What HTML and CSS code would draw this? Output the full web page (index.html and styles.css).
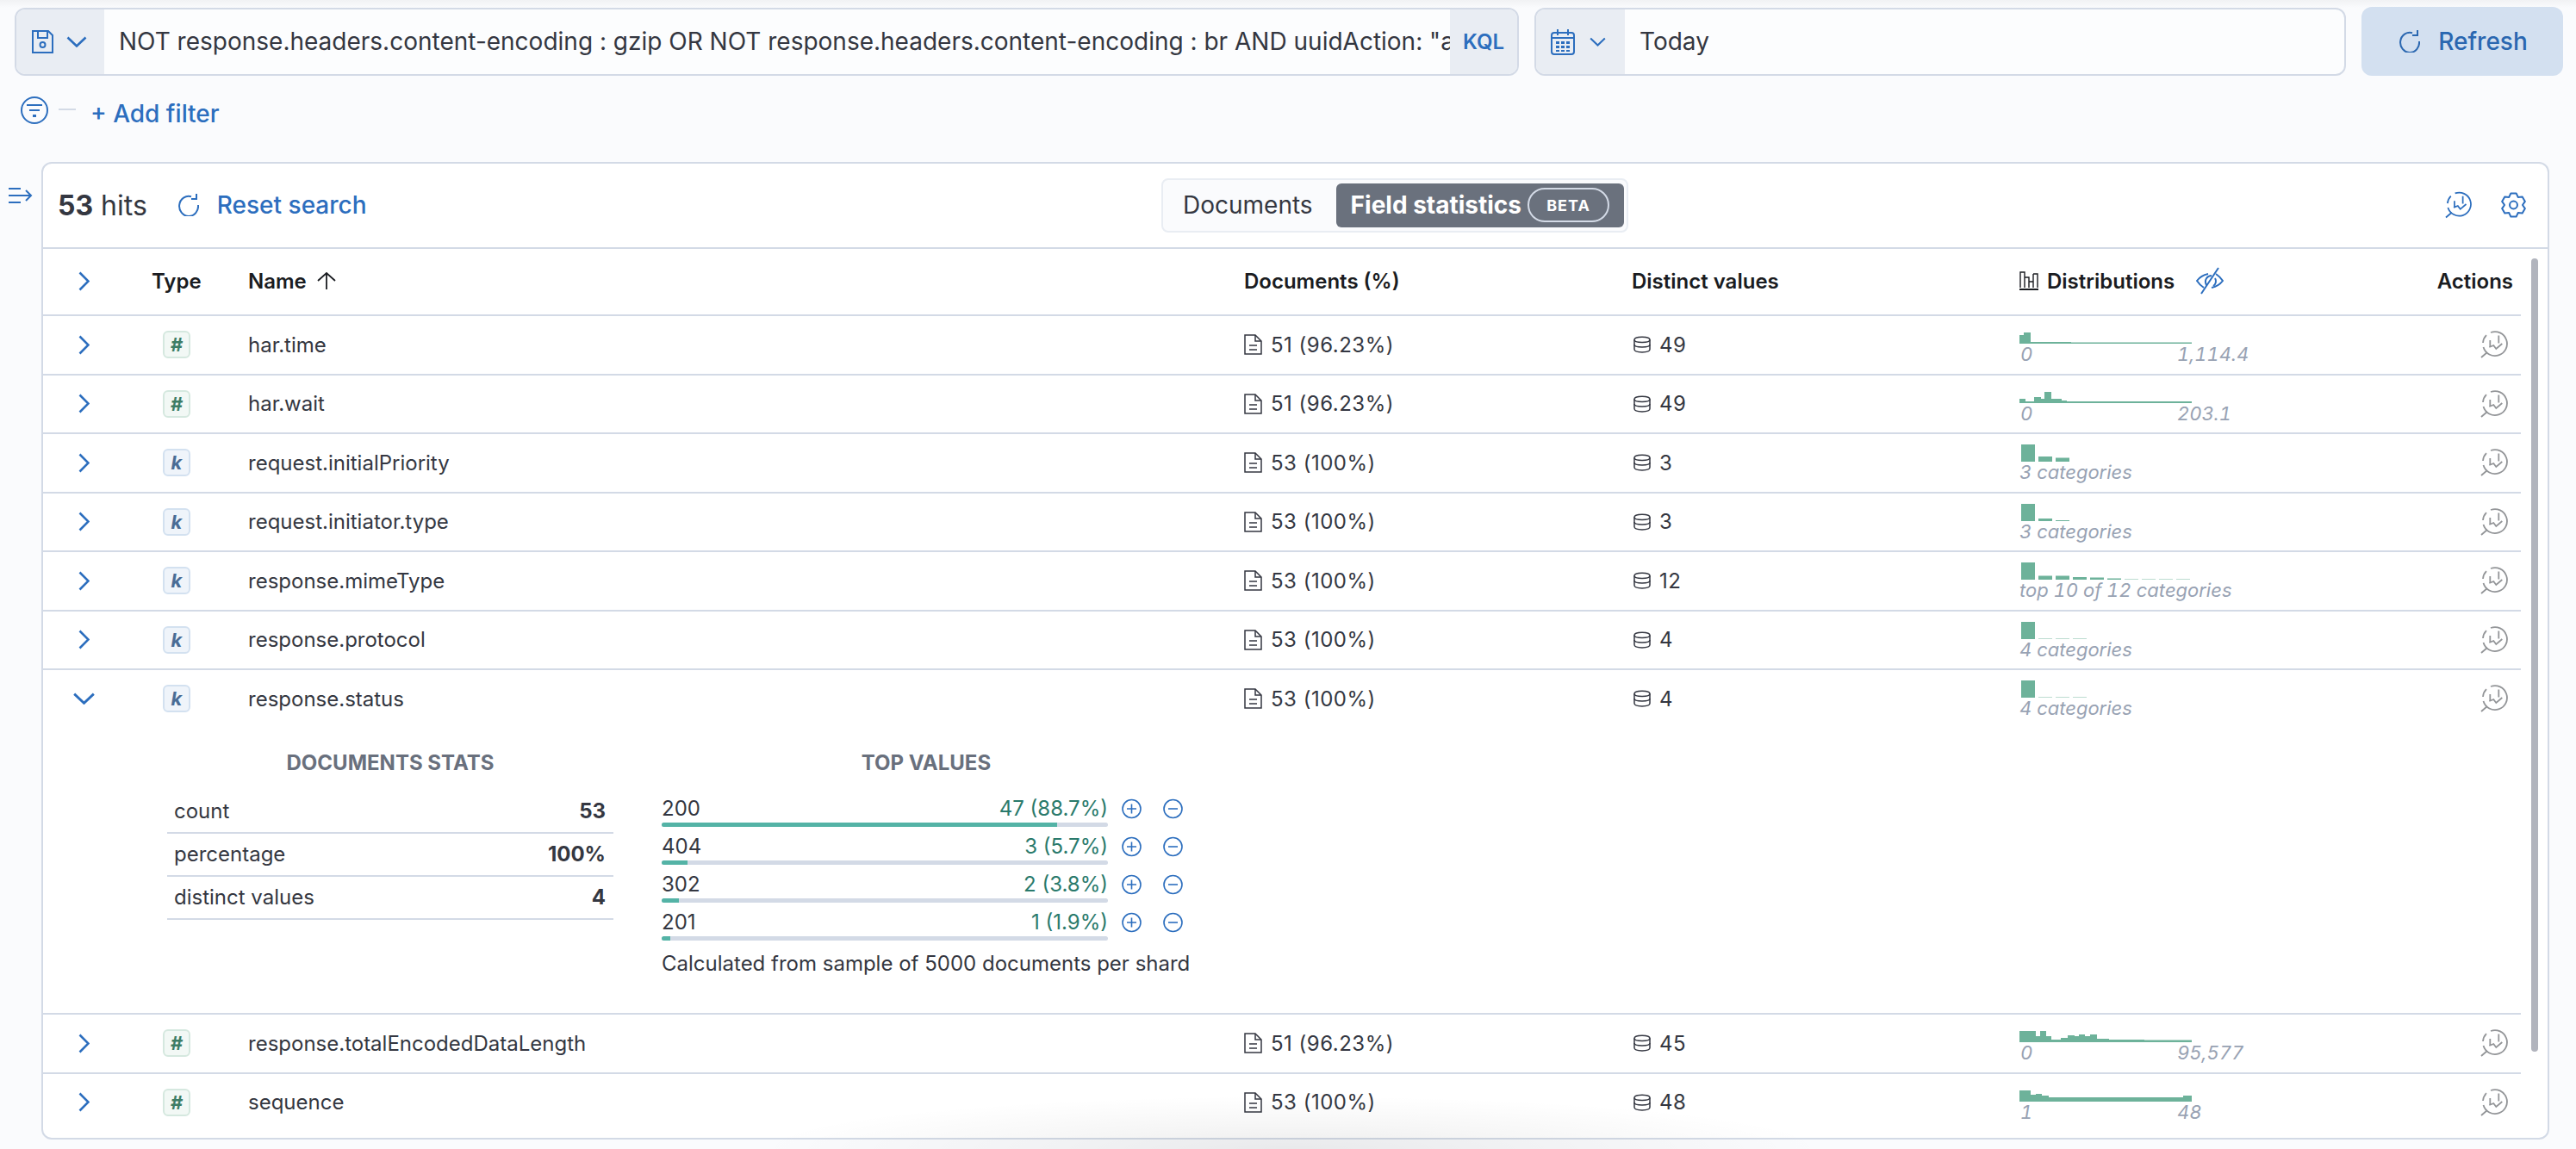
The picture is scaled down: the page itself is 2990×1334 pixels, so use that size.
FILE: index.html
```html
<!DOCTYPE html>
<html>
<head>
    <title>Discover - Field statistics</title>
    <meta charset="UTF-8">
    <link rel="stylesheet" href="styles.css">
</head>
<body>
    <svg class="defs" width="0" height="0">
        <symbol id="i-right" viewBox="0 0 13 23"><path d="M1.500 1.500 11.500 11.500 1.500 21.500" fill="none" stroke="currentColor" stroke-width="2.600"/></symbol>
        <symbol id="i-down" viewBox="0 0 24 13"><path d="M1.500 1.500 12 11.500 22.500 1.500" fill="none" stroke="currentColor" stroke-width="2.600"/></symbol>
        <symbol id="i-save" viewBox="0 0 27 27"><g fill="none" stroke="currentColor" stroke-width="2"><path d="M2 1h18l5 5v20H2z"/><path d="M8 1v8h11V1"/><circle cx="13.500" cy="17" r="3"/></g></symbol>
        <symbol id="i-calendar" viewBox="0 0 28 30"><g fill="none" stroke="currentColor" stroke-width="2"><rect x="1" y="4" width="26" height="25" rx="3"/><path d="M1 10h26M8 0v7M20 0v7"/></g><g fill="currentColor"><rect x="6" y="14" width="4" height="3"/><rect x="12" y="14" width="4" height="3"/><rect x="18" y="14" width="4" height="3"/><rect x="6" y="19" width="4" height="3"/><rect x="12" y="19" width="4" height="3"/><rect x="18" y="19" width="4" height="3"/><rect x="6" y="24" width="4" height="2"/><rect x="12" y="24" width="4" height="2"/><rect x="18" y="24" width="4" height="2"/></g></symbol>
        <symbol id="i-refresh" viewBox="0 0 24 26"><g fill="none" stroke="currentColor" stroke-width="2"><path d="M15 3.200A11 11.600 0 1 0 23 13"/><path d="M21 0v6h-6"/></g></symbol>
        <symbol id="i-filter" viewBox="0 0 32 32"><g fill="none" stroke="currentColor" stroke-width="2"><circle cx="16" cy="16" r="15"/><path d="M7 10h18M10 16h12"/><path d="M14 22.500h4" stroke-width="3"/></g></symbol>
        <symbol id="i-collapse" viewBox="0 0 28 18"><g fill="none" stroke="currentColor" stroke-width="2"><path d="M0 1h14M0 9h26M0 17h14M20 3l6 6-6 6"/></g></symbol>
        <symbol id="i-lens" viewBox="0 0 32 32"><g fill="none" stroke="currentColor" stroke-width="1.800"><path d="M12 2A14 14 0 1 1 3.500 19"/><path d="M3 14A14 14 0 0 1 7 5.200M8 25 1 31"/><path d="M11.300 18v-7M21.300 14.500V5.500M10.300 19l5-2 3 4 7-6"/></g></symbol>
        <symbol id="i-gear" viewBox="0 0 16 16"><g fill="none" stroke="currentColor" stroke-width="1.050" stroke-linejoin="round"><path d="M6.380.99H9.620L10.700 3.320 13.270 3.090 14.890 5.900 13.400 8 14.890 10.100 13.270 12.910 10.700 12.680 9.620 15.010H6.380L5.300 12.680 2.730 12.910 1.110 10.100 2.600 8 1.110 5.900 2.730 3.090 5.300 3.320Z"/><circle cx="8" cy="8" r="2.300"/></g></symbol>
        <symbol id="i-eye-off" viewBox="0 0 32 32"><g fill="none" stroke="currentColor" stroke-width="2"><path d="M14 8C9 9 4 12 1 16 3 19 6 22 9 24M18 24C23 23 28 20 31 16 29 13 26 10 23 8"/><path d="M26 1 6 31M12 21C9 15 13 10 18 10M20 22C23 20 24 16 22 13"/></g></symbol>
        <symbol id="i-doc" viewBox="0 0 21 24"><g fill="none" stroke="currentColor" stroke-width="1.500"><path d="M1 1h12l7 7v15H1z"/><path d="M13 1v7h7M6 13h9M6 18h9"/></g></symbol>
        <symbol id="i-db" viewBox="0 0 20 20"><g fill="none" stroke="currentColor" stroke-width="1.500"><path d="M1 4.500c0-4.500 18-4.500 18 0v11c0 4.500-18 4.500-18 0z"/><path d="M1 4.500c0 4 18 4 18 0M1 10c0 4 18 4 18 0"/></g></symbol>
        <symbol id="i-bars" viewBox="0 0 22 22"><g fill="none" stroke="currentColor" stroke-width="1.400"><path d="M1 19V1h5v18M6 7h5v12M11 12h5M16 3h5v16M16 3v16"/></g><rect y="20" width="22" height="2" fill="currentColor"/></symbol>
        <symbol id="i-up" viewBox="0 0 22 20"><path d="M1 10 11 1l10 9M11 1v19" fill="none" stroke="currentColor" stroke-width="1.800"/></symbol>
        <symbol id="i-plus" viewBox="0 0 25 24"><g fill="none" stroke="currentColor" stroke-width="1.600"><circle cx="12.500" cy="12" r="10.500"/><path d="M7 12h11M12.500 6.500v11"/></g></symbol>
        <symbol id="i-minus" viewBox="0 0 25 24"><g fill="none" stroke="currentColor" stroke-width="1.600"><circle cx="12.500" cy="12" r="10.500"/><path d="M7 12h11"/></g></symbol>
    </svg>

    <div class="top-shadow"></div>

    <div class="search-bar">
        <div class="field query-field">
            <div class="prepend save-prepend">
                <svg class="icon-save"><use href="#i-save"/></svg>
                <svg class="icon-down"><use href="#i-down"/></svg>
            </div>
            <div class="field-text">NOT response.headers.content-encoding : gzip OR NOT response.headers.content-encoding : br AND uuidAction: "ac</div>
            <div class="append">KQL</div>
        </div>
        <div class="field date-field">
            <div class="prepend date-prepend">
                <svg class="icon-calendar"><use href="#i-calendar"/></svg>
                <svg class="icon-down-small"><use href="#i-down"/></svg>
            </div>
            <div class="field-text">Today</div>
        </div>
        <button class="refresh-btn">
            <svg class="icon-refresh"><use href="#i-refresh"/></svg>
            Refresh
        </button>
    </div>

    <div class="filter-bar">
        <svg class="icon-filter"><use href="#i-filter"/></svg>
        <span class="filter-dash"></span>
        <a class="add-filter">+ Add filter</a>
    </div>

    <div class="main">
        <svg class="icon-collapse"><use href="#i-collapse"/></svg>
        <div class="panel">
            <div class="panel-header">
                <div class="hits">
                    <span class="hits-count"><b>53</b> hits</span>
                    <svg class="icon-reset"><use href="#i-refresh"/></svg>
                    <a class="reset-link">Reset search</a>
                </div>
                <div class="tabs">
                    <span class="tab">Documents</span>
                    <span class="tab tab-active">Field statistics <span class="beta">BETA</span></span>
                </div>
                <div class="panel-tools">
                    <svg class="icon-tool"><use href="#i-lens"/></svg>
                    <svg class="icon-tool"><use href="#i-gear"/></svg>
                </div>
            </div>

            <div class="table">
                <div class="row head-row">
                    <div class="cell-exp"><svg class="icon-right"><use href="#i-right"/></svg></div>
                    <div>Type</div>
                    <div class="name-head">Name <svg class="icon-up"><use href="#i-up"/></svg></div>
                    <div>Documents (%)</div>
                    <div>Distinct values</div>
                    <div class="dist-head"><svg class="icon-bars"><use href="#i-bars"/></svg> Distributions <svg class="icon-eye"><use href="#i-eye-off"/></svg></div>
                    <div class="cell-action">Actions</div>
                </div>

                <div class="row">
                    <div class="cell-exp"><svg class="icon-right"><use href="#i-right"/></svg></div>
                    <div class="cell-type"><span class="token token-num">#</span></div>
                    <div>har.time</div>
                    <div class="cell-stat"><svg class="icon-doc"><use href="#i-doc"/></svg> 51 (96.23%)</div>
                    <div class="cell-stat"><svg class="icon-db"><use href="#i-db"/></svg> 49</div>
                    <div class="cell-dist">
                        <svg class="spark" viewBox="0 0 200 32"><path d="M0 32V22H5V19H13V30H60V30.500H200V32Z"/></svg>
                        <div class="dist-range"><span>0</span><span>1,114.4</span></div>
                    </div>
                    <div class="cell-action"><svg class="icon-lens"><use href="#i-lens"/></svg></div>
                </div>

                <div class="row">
                    <div class="cell-exp"><svg class="icon-right"><use href="#i-right"/></svg></div>
                    <div class="cell-type"><span class="token token-num">#</span></div>
                    <div>har.wait</div>
                    <div class="cell-stat"><svg class="icon-doc"><use href="#i-doc"/></svg> 51 (96.23%)</div>
                    <div class="cell-stat"><svg class="icon-db"><use href="#i-db"/></svg> 49</div>
                    <div class="cell-dist">
                        <svg class="spark" viewBox="0 0 200 32"><path d="M0 32V27H7V30H17V25H25V27H29V19H37V27H41V27H49V29H55V30H200V32Z"/></svg>
                        <div class="dist-range"><span>0</span><span>203.1</span></div>
                    </div>
                    <div class="cell-action"><svg class="icon-lens"><use href="#i-lens"/></svg></div>
                </div>

                <div class="row">
                    <div class="cell-exp"><svg class="icon-right"><use href="#i-right"/></svg></div>
                    <div class="cell-type"><span class="token token-kw">k</span></div>
                    <div>request.initialPriority</div>
                    <div class="cell-stat"><svg class="icon-doc"><use href="#i-doc"/></svg> 53 (100%)</div>
                    <div class="cell-stat"><svg class="icon-db"><use href="#i-db"/></svg> 3</div>
                    <div class="cell-dist">
                        <svg class="spark" viewBox="0 0 200 32"><path d="M2 12h16v20H2zM22 26h16v6H22zM42 27.500h16V32H42z"/></svg>
                        <div class="dist-label">3 categories</div>
                    </div>
                    <div class="cell-action"><svg class="icon-lens"><use href="#i-lens"/></svg></div>
                </div>

                <div class="row">
                    <div class="cell-exp"><svg class="icon-right"><use href="#i-right"/></svg></div>
                    <div class="cell-type"><span class="token token-kw">k</span></div>
                    <div>request.initiator.type</div>
                    <div class="cell-stat"><svg class="icon-doc"><use href="#i-doc"/></svg> 53 (100%)</div>
                    <div class="cell-stat"><svg class="icon-db"><use href="#i-db"/></svg> 3</div>
                    <div class="cell-dist">
                        <svg class="spark" viewBox="0 0 200 32"><path d="M2 12h16v20H2zM22 29h16v3H22zM42 31h16v1H42z"/></svg>
                        <div class="dist-label">3 categories</div>
                    </div>
                    <div class="cell-action"><svg class="icon-lens"><use href="#i-lens"/></svg></div>
                </div>

                <div class="row">
                    <div class="cell-exp"><svg class="icon-right"><use href="#i-right"/></svg></div>
                    <div class="cell-type"><span class="token token-kw">k</span></div>
                    <div>response.mimeType</div>
                    <div class="cell-stat"><svg class="icon-doc"><use href="#i-doc"/></svg> 53 (100%)</div>
                    <div class="cell-stat"><svg class="icon-db"><use href="#i-db"/></svg> 12</div>
                    <div class="cell-dist">
                        <svg class="spark" viewBox="0 0 200 32"><path d="M2 12h16v20H2zM22 27.500h16V32H22zM42 27.500h16V32H42zM62 29h16v3H62zM82 29.500h16V32H82zM102 30.500h16V32h-16z"/><path class="faint" d="M122 31h16v1h-16zM142 31h16v1h-16zM162 31h16v1h-16zM182 31h16v1h-16z"/></svg>
                        <div class="dist-label">top 10 of 12 categories</div>
                    </div>
                    <div class="cell-action"><svg class="icon-lens"><use href="#i-lens"/></svg></div>
                </div>

                <div class="row">
                    <div class="cell-exp"><svg class="icon-right"><use href="#i-right"/></svg></div>
                    <div class="cell-type"><span class="token token-kw">k</span></div>
                    <div>response.protocol</div>
                    <div class="cell-stat"><svg class="icon-doc"><use href="#i-doc"/></svg> 53 (100%)</div>
                    <div class="cell-stat"><svg class="icon-db"><use href="#i-db"/></svg> 4</div>
                    <div class="cell-dist">
                        <svg class="spark" viewBox="0 0 200 32"><path d="M2 12h16v20H2z"/><path class="faint" d="M22 31h16v1H22zM42 31h16v1H42zM62 31h16v1H62z"/></svg>
                        <div class="dist-label">4 categories</div>
                    </div>
                    <div class="cell-action"><svg class="icon-lens"><use href="#i-lens"/></svg></div>
                </div>

                <div class="row-open">
                    <div class="row row-plain">
                        <div class="cell-exp"><svg class="icon-open"><use href="#i-down"/></svg></div>
                        <div class="cell-type"><span class="token token-kw">k</span></div>
                        <div>response.status</div>
                        <div class="cell-stat"><svg class="icon-doc"><use href="#i-doc"/></svg> 53 (100%)</div>
                        <div class="cell-stat"><svg class="icon-db"><use href="#i-db"/></svg> 4</div>
                        <div class="cell-dist">
                            <svg class="spark" viewBox="0 0 200 32"><path d="M2 12h16v20H2z"/><path class="faint" d="M22 31h16v1H22zM42 31h16v1H42zM62 31h16v1H62z"/></svg>
                            <div class="dist-label">4 categories</div>
                        </div>
                        <div class="cell-action"><svg class="icon-lens"><use href="#i-lens"/></svg></div>
                    </div>
                    <div class="details">
                        <div class="stats-col">
                            <h4 class="detail-title">DOCUMENTS STATS</h4>
                            <div class="stat-row"><span>count</span><b>53</b></div>
                            <div class="stat-row"><span>percentage</span><b>100%</b></div>
                            <div class="stat-row"><span>distinct values</span><b>4</b></div>
                        </div>
                        <div class="top-col">
                            <h4 class="detail-title">TOP VALUES</h4>
                            <div class="top-row">
                                <div class="top-text"><span>200</span><span class="top-count">47 (88.7%)</span></div>
                                <svg class="icon-circle"><use href="#i-plus"/></svg>
                                <svg class="icon-circle"><use href="#i-minus"/></svg>
                                <div class="top-bar"><div class="top-fill" style="width: 88.7%"></div></div>
                            </div>
                            <div class="top-row">
                                <div class="top-text"><span>404</span><span class="top-count">3 (5.7%)</span></div>
                                <svg class="icon-circle"><use href="#i-plus"/></svg>
                                <svg class="icon-circle"><use href="#i-minus"/></svg>
                                <div class="top-bar"><div class="top-fill" style="width: 5.7%"></div></div>
                            </div>
                            <div class="top-row">
                                <div class="top-text"><span>302</span><span class="top-count">2 (3.8%)</span></div>
                                <svg class="icon-circle"><use href="#i-plus"/></svg>
                                <svg class="icon-circle"><use href="#i-minus"/></svg>
                                <div class="top-bar"><div class="top-fill" style="width: 3.8%"></div></div>
                            </div>
                            <div class="top-row">
                                <div class="top-text"><span>201</span><span class="top-count">1 (1.9%)</span></div>
                                <svg class="icon-circle"><use href="#i-plus"/></svg>
                                <svg class="icon-circle"><use href="#i-minus"/></svg>
                                <div class="top-bar"><div class="top-fill" style="width: 1.9%"></div></div>
                            </div>
                            <div class="sample-note">Calculated from sample of 5000 documents per shard</div>
                        </div>
                    </div>
                </div>

                <div class="row">
                    <div class="cell-exp"><svg class="icon-right"><use href="#i-right"/></svg></div>
                    <div class="cell-type"><span class="token token-num">#</span></div>
                    <div>response.totalEncodedDataLength</div>
                    <div class="cell-stat"><svg class="icon-doc"><use href="#i-doc"/></svg> 51 (96.23%)</div>
                    <div class="cell-stat"><svg class="icon-db"><use href="#i-db"/></svg> 45</div>
                    <div class="cell-dist">
                        <svg class="spark" viewBox="0 0 200 32"><path d="M0 32V19H19V25H24V19H31V25H37V29H48V27H56V24H64V25H69V23H76V25H82V23H90V28H104V29H145V29.500H200V32Z"/></svg>
                        <div class="dist-range"><span>0</span><span>95,577</span></div>
                    </div>
                    <div class="cell-action"><svg class="icon-lens"><use href="#i-lens"/></svg></div>
                </div>

                <div class="row row-plain">
                    <div class="cell-exp"><svg class="icon-right"><use href="#i-right"/></svg></div>
                    <div class="cell-type"><span class="token token-num">#</span></div>
                    <div>sequence</div>
                    <div class="cell-stat"><svg class="icon-doc"><use href="#i-doc"/></svg> 53 (100%)</div>
                    <div class="cell-stat"><svg class="icon-db"><use href="#i-db"/></svg> 48</div>
                    <div class="cell-dist">
                        <svg class="spark" viewBox="0 0 200 32"><path d="M0 32V19H13V24H19V23H26V25H34V27H190V25H200V32Z"/></svg>
                        <div class="dist-range"><span>1</span><span>48</span></div>
                    </div>
                    <div class="cell-action"><svg class="icon-lens"><use href="#i-lens"/></svg></div>
                </div>
            </div>

            <div class="scrollbar"></div>
        </div>
    </div>

    <div class="bottom-shadow"></div>
</body>
</html>
```

FILE: styles.css
```css
html, body {
    margin: 0;
    padding: 0;
    height: 1334px;
    overflow: hidden;
    background: #fafbfd;
    color: #343741;
    font-family: Inter, "Liberation Sans", sans-serif;
}

svg {
    display: block;
    flex: none;
}

.defs {
    position: absolute;
}

.top-shadow {
    position: absolute;
    top: 0;
    left: 0;
    right: 0;
    height: 9px;
    background: linear-gradient(to bottom, #f1f2f4 0%, #fafbfd 100%);
}

.bottom-shadow {
    position: absolute;
    left: 880px;
    width: 1240px;
    bottom: 0;
    height: 62px;
    background: radial-gradient(ellipse 50% 100% at 50% 100%, rgba(0,0,0,.07) 0%, rgba(0,0,0,.035) 45%, rgba(0,0,0,0) 100%);
    pointer-events: none;
}

/* search row */
.search-bar {
    position: relative;
    display: flex;
    box-sizing: border-box;
    height: 88px;
    padding: 8px 15px 0 17px;
    gap: 18px;
}

.field {
    display: flex;
    box-sizing: border-box;
    height: 79px;
    margin-top: 1px;
    border: 2px solid #d3dae6;
    border-radius: 12px;
    overflow: hidden;
    background: #fcfdfe;
    font-size: 28px;
}

.query-field {
    width: 1746px;
}

.date-field {
    width: 942px;
}

.prepend {
    display: flex;
    align-items: center;
    flex: none;
    background: #e9edf3;
    color: #2c6ebe;
}

.save-prepend {
    width: 102px;
    padding-left: 17px;
    box-sizing: border-box;
}

.date-prepend {
    width: 103px;
    padding-left: 17px;
    box-sizing: border-box;
}

.icon-save {
    width: 27px;
    height: 27px;
    margin-right: 14px;
}

.icon-down {
    width: 24px;
    height: 13px;
}

.icon-calendar {
    width: 28px;
    height: 30px;
    margin-right: 17px;
}

.icon-down-small {
    width: 19px;
    height: 11px;
}

.field-text {
    flex: 1;
    padding-left: 17px;
    line-height: 75px;
    white-space: nowrap;
    overflow: hidden;
}

.append {
    flex: none;
    width: 78px;
    background: #e9edf3;
    color: #2c6ebe;
    font-size: 24px;
    font-weight: 600;
    line-height: 75px;
    text-align: center;
}

.refresh-btn {
    display: flex;
    align-items: center;
    justify-content: center;
    gap: 21px;
    width: 234px;
    height: 80px;
    padding: 0 0 0 3px;
    border: none;
    border-radius: 12px;
    background: #d3e0f0;
    color: #2a67b0;
    font-family: inherit;
    font-size: 28px;
    font-weight: 500;
}

.icon-refresh {
    width: 24px;
    height: 26px;
}

/* filter row */
.filter-bar {
    display: flex;
    align-items: center;
    height: 100px;
    padding: 0 0 12px 24px;
    box-sizing: border-box;
}

.icon-filter {
    width: 32px;
    height: 32px;
    margin-bottom: 8px;
    color: #2c6ebe;
}

.filter-dash {
    width: 20px;
    height: 2px;
    margin: 0 17px 10px 12px;
    background: #d3dae6;
}

.add-filter {
    color: #2c6ebe;
    font-size: 28px;
    font-weight: 500;
}

/* results */
.main {
    display: flex;
    padding-left: 10px;
}

.icon-collapse {
    width: 28px;
    height: 18px;
    margin: 30px 10px 0 0;
    color: #2c6ebe;
}

.panel {
    position: relative;
    box-sizing: border-box;
    width: 2911px;
    height: 1135px;
    border: 2px solid #d3dae6;
    border-radius: 12px;
    background: #fff;
    overflow: hidden;
}

.panel-header {
    display: flex;
    align-items: center;
    box-sizing: border-box;
    height: 99px;
    padding: 0 24px 1px 0;
    border-bottom: 2px solid #d3dae6;
}

.hits {
    display: flex;
    align-items: center;
    width: 1298px;
    padding-left: 17px;
    box-sizing: border-box;
}

.hits-count {
    font-size: 32px;
}

.hits-count b {
    font-weight: 700;
}

.icon-reset {
    width: 24px;
    height: 26px;
    margin: 0 21px 0 36px;
    color: #2c6ebe;
}

.reset-link {
    color: #2c6ebe;
    font-size: 28px;
    font-weight: 500;
}

.tabs {
    display: flex;
    box-sizing: border-box;
    width: 542px;
    height: 63px;
    padding: 4px 3px;
    border: 2px solid #e9edf3;
    border-radius: 8px;
    background: #fafbfd;
    font-size: 28px;
}

.tab {
    display: flex;
    align-items: center;
    padding: 0 27px 0 20px;
}

.tab-active {
    flex: 1;
    padding: 0 0 0 17px;
    border-radius: 6px;
    background: #6a717d;
    color: #fff;
    font-weight: 700;
}

.beta {
    display: flex;
    align-items: center;
    justify-content: center;
    box-sizing: border-box;
    width: 95px;
    height: 40px;
    margin-left: 7px;
    border: 2px solid #d3dae6;
    border-radius: 20px;
    font-size: 18px;
    font-weight: 700;
    letter-spacing: 1px;
}

.panel-tools {
    display: flex;
    gap: 33px;
    margin-left: auto;
    color: #2c6ebe;
}

.icon-tool {
    width: 31px;
    height: 32px;
}

.table {
    width: 2876px;
    font-size: 24px;
}

.row {
    display: grid;
    grid-template-columns: 126px 112px 1156px 450px 450px 1fr 120px;
    align-items: center;
    box-sizing: border-box;
    height: 68.500px;
    border-bottom: 2px solid #d3dae6;
}

.row > div {
    white-space: nowrap;
}

.row-plain {
    padding-bottom: 2px;
    border-bottom: none;
}

.head-row {
    height: 78px;
    padding-bottom: 2px;
    color: #1a1c21;
    font-weight: 600;
}

.cell-exp {
    padding-left: 41px;
    color: #2c6ebe;
}

.icon-right {
    width: 13px;
    height: 23px;
}

.icon-open {
    width: 27px;
    height: 14px;
    margin-left: -7px;
}

.cell-type {
    padding-left: 13px;
}

.token {
    display: flex;
    align-items: center;
    justify-content: center;
    box-sizing: border-box;
    width: 32px;
    height: 32px;
    border-radius: 6px;
    font-size: 22px;
    font-style: italic;
    font-weight: 700;
}

.token-num {
    border: 2px solid #d5e8df;
    background: #f2f8f5;
    color: #3e7d66;
}

.token-kw {
    border: 2px solid #d3e1f0;
    background: #eff4fa;
    color: #4a6c95;
}

.name-head {
    display: flex;
    align-items: center;
    gap: 12px;
}

.icon-up {
    width: 22px;
    height: 20px;
    color: #1a1c21;
}

.cell-stat {
    display: flex;
    align-items: center;
    gap: 10px;
    letter-spacing: .5px;
}

.icon-doc {
    width: 21px;
    height: 24px;
}

.icon-db {
    width: 20px;
    height: 20px;
    margin-left: 2px;
}

.dist-head {
    display: flex;
    align-items: center;
    gap: 10px;
}

.icon-bars {
    width: 22px;
    height: 22px;
}

.icon-eye {
    width: 32px;
    height: 32px;
    margin-left: 15px;
    color: #2c6ebe;
}

.cell-action {
    display: flex;
    justify-content: flex-end;
    padding-right: 9px;
}

.icon-lens {
    width: 32px;
    height: 32px;
    margin-right: 6px;
    color: #939598;
}

.cell-dist {
    align-self: start;
}

.spark {
    width: 200px;
    height: 32px;
    fill: #6db29a;
}

.spark .faint {
    opacity: .45;
}

.dist-range,
.dist-label {
    font-size: 22px;
    font-style: italic;
    font-variant-numeric: tabular-nums;
    line-height: 24px;
    color: #98a2b3;
}

.dist-range {
    position: relative;
    display: flex;
    padding-left: 1px;
}

.dist-range span:last-child {
    position: absolute;
    left: 183px;
}

/* expanded row */
.row-open {
    box-sizing: border-box;
    height: 400px;
    border-bottom: 2px solid #d3dae6;
}

.details {
    display: flex;
    padding-left: 144px;
}

.detail-title {
    margin: 0;
    height: 28px;
    color: #69707d;
    font-size: 24px;
    font-weight: 700;
    line-height: 28px;
    text-align: center;
}

.stats-col {
    box-sizing: border-box;
    width: 518px;
    margin-top: 25px;
}

.stats-col .detail-title {
    margin-bottom: 18px;
}

.stat-row {
    display: flex;
    justify-content: space-between;
    box-sizing: border-box;
    height: 50px;
    padding: 0 9px 0 8px;
    border-bottom: 2px solid #d3dae6;
    line-height: 48px;
}

.stat-row b {
    font-weight: 700;
}

.top-col {
    width: 620px;
    margin: 25px 0 0 56px;
}

.top-col .detail-title {
    width: 614px;
    margin-bottom: 24px;
}

.top-row {
    display: grid;
    grid-template-columns: 518px 25px 25px;
    grid-template-rows: 30px 5px;
    column-gap: 23px;
    row-gap: 1px;
    align-content: start;
    align-items: center;
    height: 44px;
}

.top-row .icon-circle {
    margin-left: -8px;
}

.top-text {
    display: flex;
    justify-content: space-between;
    height: 30px;
    line-height: 30px;
}

.top-count {
    color: #2a7a6c;
}

.icon-circle {
    width: 25px;
    height: 24px;
    color: #2c6ebe;
}

.top-bar {
    grid-column: 1;
    height: 5px;
    border-radius: 3px;
    background: #d3dae6;
    overflow: hidden;
}

.top-fill {
    height: 100%;
    background: #54b3a6;
}

.sample-note {
    margin-top: 4px;
    line-height: 30px;
}

.scrollbar {
    position: absolute;
    top: 110px;
    left: 2888px;
    width: 8px;
    height: 921px;
    border-radius: 4px;
    background: #b1b4bd;
}
```
